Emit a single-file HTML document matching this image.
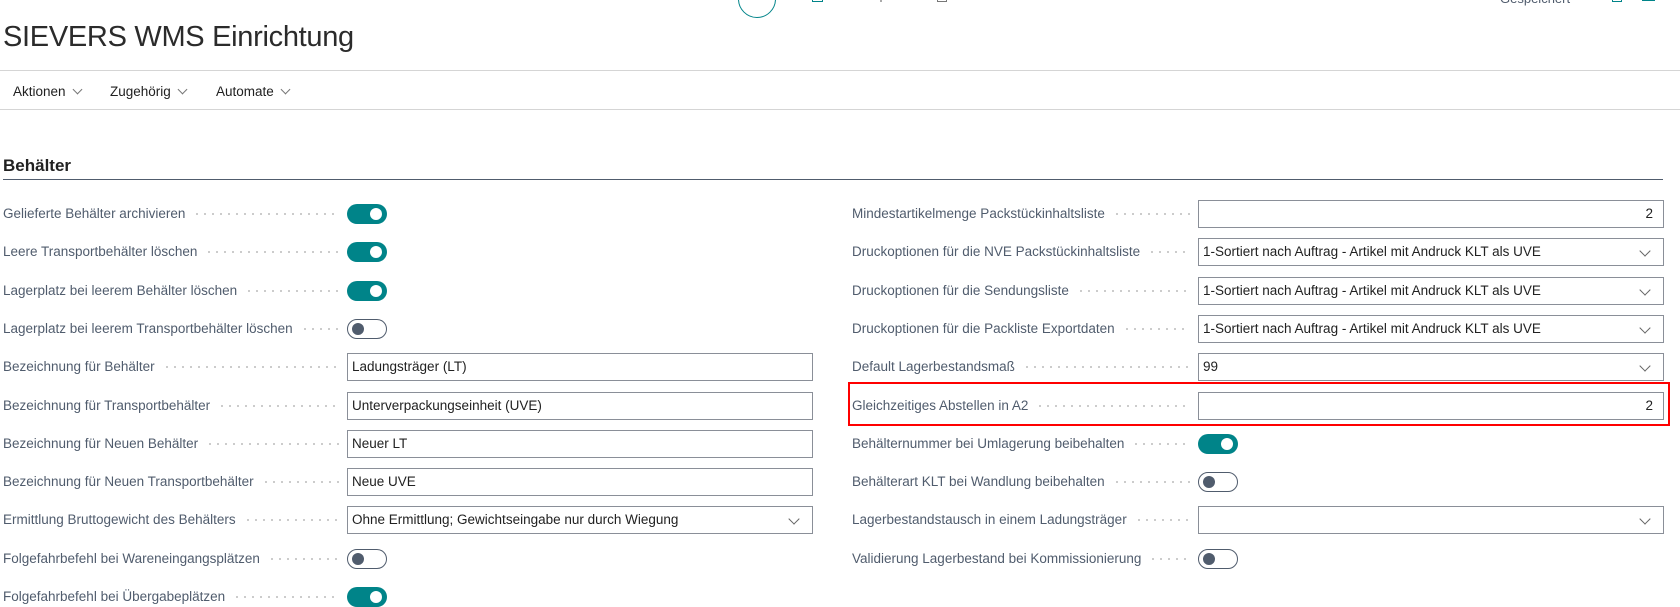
<!DOCTYPE html>
<html><head><meta charset="utf-8"><style>
*{box-sizing:border-box;margin:0;padding:0}
body{width:1680px;height:607px;overflow:hidden;background:#fff;font-family:"Liberation Sans",sans-serif;color:#505c6d;position:relative}
.a{position:absolute}
.title{left:3px;top:21px;font-size:29px;font-weight:normal;color:#2b2b2b;letter-spacing:-0.3px}
.hr{height:1px;background:#d5d5d5;left:0;width:1680px}
.menu{top:84px;font-size:13.5px;color:#212121}
.menu span{position:absolute;white-space:nowrap}
.chev{display:inline-block;width:7px;height:7px;border-right:1px solid #777;border-bottom:1px solid #777;transform:rotate(45deg);margin-left:8px;position:relative;top:-3px}
.h{left:3px;top:156px;font-size:17px;font-weight:bold;color:#212121}
.hl{left:3px;top:179px;width:1660px;height:1px;background:#505c6d}
.lab{font-size:13.5px;white-space:nowrap;height:20px;line-height:20px;display:flex;align-items:center}
.dots{flex:1;height:2px;margin:0 8px 0 8px;background-image:radial-gradient(circle,#c8c8c8 1px,transparent 1.2px);background-size:8px 2px;background-repeat:repeat-x}
.inp{border:1px solid #8a8f98;height:28px;font-size:13.5px;color:#212121;padding:0 4px;line-height:26px;white-space:nowrap;overflow:hidden}
.dd::after{content:"";position:absolute;right:14px;top:8px;width:7px;height:7px;border-right:1px solid #666;border-bottom:1px solid #666;transform:rotate(45deg)}
.tg{width:40px;height:20px;border-radius:10px}
.on{background:#008489}
.on::after{content:"";position:absolute;right:5px;top:4px;width:12px;height:12px;border-radius:50%;background:#fff}
.off{border:1px solid #505c6d;background:#fff}
.off::after{content:"";position:absolute;left:4px;top:3px;width:12px;height:12px;border-radius:50%;background:#505c6d}
</style></head><body>
<div class="a" style="left:738px;top:-20px;width:38px;height:38px;border:1.5px solid #008489;border-radius:50%"></div>
<div class="a" style="left:812px;top:-6px;width:11px;height:8px;border:1.5px solid #008489"></div>
<div class="a" style="left:880px;top:-6px;width:2px;height:8px;background:#aaa"></div>
<div class="a" style="left:937px;top:-6px;width:10px;height:8px;border:1.5px solid #777"></div>
<div class="a" style="left:1500px;top:-9px;font-size:13px;color:#505c6d">Gespeichert</div>
<div class="a" style="left:1612px;top:-6px;width:10px;height:8px;border:1.5px solid #008489"></div>
<div class="a" style="left:1642px;top:-1px;width:13px;height:2px;background:#008489"></div>
<div class="a title">SIEVERS WMS Einrichtung</div>
<div class="a hr" style="top:70px"></div>
<div class="a menu" style="left:0;width:400px">
<span style="left:13px">Aktionen<i class="chev"></i></span>
<span style="left:110px">Zugehörig<i class="chev"></i></span>
<span style="left:216px">Automate<i class="chev"></i></span>
</div>
<div class="a hr" style="top:109px"></div>
<div class="a h">Behälter</div>
<div class="a hl"></div>
<div id="c"></div>
<div class="a" style="left:848px;top:382px;width:822px;height:44px;border:2px solid #f00"></div>
<script>
var L=[["Gelieferte Behälter archivieren","on"],["Leere Transportbehälter löschen","on"],["Lagerplatz bei leerem Behälter löschen","on"],["Lagerplatz bei leerem Transportbehälter löschen","off"],["Bezeichnung für Behälter","t","Ladungsträger (LT)"],["Bezeichnung für Transportbehälter","t","Unterverpackungseinheit (UVE)"],["Bezeichnung für Neuen Behälter","t","Neuer LT"],["Bezeichnung für Neuen Transportbehälter","t","Neue UVE"],["Ermittlung Bruttogewicht des Behälters","d","Ohne Ermittlung; Gewichtseingabe nur durch Wiegung"],["Folgefahrbefehl bei Wareneingangsplätzen","off"],["Folgefahrbefehl bei Übergabeplätzen","on"]];
var S="1-Sortiert nach Auftrag - Artikel mit Andruck KLT als UVE";
var R=[["Mindestartikelmenge Packstückinhaltsliste","n","2"],["Druckoptionen für die NVE Packstückinhaltsliste","d",S],["Druckoptionen für die Sendungsliste","d",S],["Druckoptionen für die Packliste Exportdaten","d",S],["Default Lagerbestandsmaß","d","99"],["Gleichzeitiges Abstellen in A2","n","2"],["Behälternummer bei Umlagerung beibehalten","on"],["Behälterart KLT bei Wandlung beibehalten","off"],["Lagerbestandstausch in einem Ladungsträger","d",""],["Validierung Lagerbestand bei Kommissionierung","off"]];
var h="";
function col(arr,lx,ix,iw){arr.forEach(function(r,i){var c=214+38.3*i;
h+='<div class="a lab" style="left:'+lx+'px;top:'+(c-10)+'px;width:'+(ix-lx)+'px"><span>'+r[0]+'</span><span class="dots"></span></div>';
if(r[1]=="on"||r[1]=="off")h+='<div class="a tg '+r[1]+'" style="left:'+ix+'px;top:'+(c-10)+'px"></div>';
else h+='<div class="a inp'+(r[1]=="d"?" dd":"")+'" style="left:'+ix+'px;top:'+(c-14)+'px;width:'+iw+'px;'+(r[1]=="n"?"text-align:right;padding-right:10px":"")+'">'+r[2]+'</div>';});}
col(L,3,347,466);col(R,852,1198,466);
document.getElementById("c").innerHTML=h;
</script>
</body></html>
